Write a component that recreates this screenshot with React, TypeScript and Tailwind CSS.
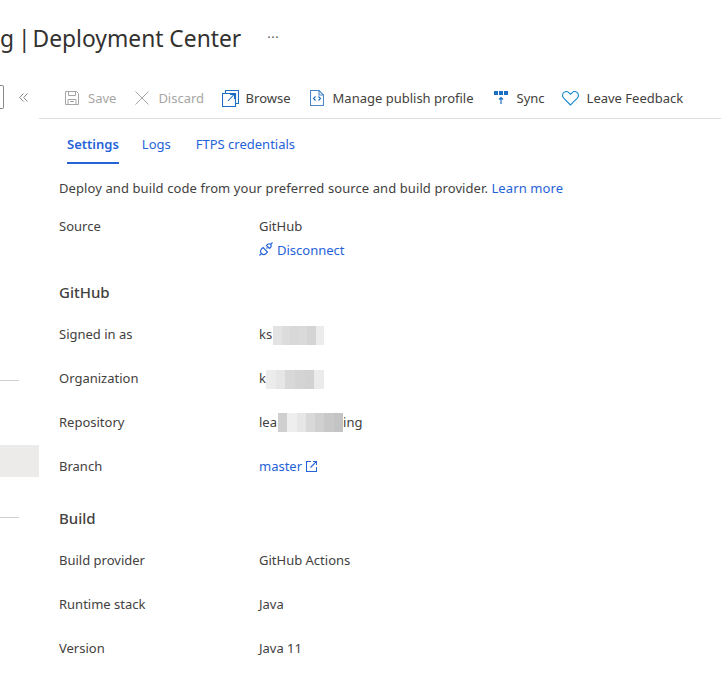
import React from "react";

const Blur = ({ cells, cellClass, className = "" }: { cells: string[]; cellClass: string; className?: string }) => (
  <span className={"inline-flex h-[19px] " + className}>
    {cells.map((c, i) => (
      <span key={i} className={"h-full " + cellClass} style={{ background: c }} />
    ))}
  </span>
);

const Row = ({ label, children }: { label: string; children: React.ReactNode }) => (
  <div className="flex items-center h-[44px]">
    <div className="w-[200px] shrink-0">{label}</div>
    <div className="flex items-center">{children}</div>
  </div>
);

const Tool = ({ icon, label, disabled, className = "", labelClass = "" }: { icon: React.ReactNode; label: string; disabled?: boolean; className?: string; labelClass?: string }) => (
  <div className={"flex items-center gap-[8px] " + (disabled ? "text-[#a8a6a4] " : "text-[#424140] ") + className}>
    <span className="flex w-[16px] h-[16px] items-center justify-center">{icon}</span>
    <span className={labelClass}>{label}</span>
  </div>
);

const SaveIcon = () => (
  <svg width="16" height="16" viewBox="0 0 16 16" fill="none" stroke="#a8a6a4" strokeWidth="1">
    <path d="M1.500 1.500h11l2 2v11h-13z" />
    <path d="M4.500 1.500v4h7v-4M4 14.500v-5h8v5M6 11.500h4" />
  </svg>
);
const XIcon = () => (
  <svg width="16" height="16" viewBox="0 0 16 16" fill="none" stroke="#a8a6a4" strokeWidth="1">
    <path d="M1.500 1.500l13 13M14.500 1.500l-13 13" />
  </svg>
);
const BrowseIcon = () => (
  <svg width="17" height="17" viewBox="0 0 17 17" fill="none" stroke="#1b6ec2" strokeWidth="1.100" className="shrink-0">
    <path d="M3.500 3.500v-3h13v13h-3" />
    <path d="M.500 3.500h13v13H.500z" />
    <path d="M6 11l6-6.500M8 4.500h4.500V9" />
  </svg>
);
const FileIcon = () => (
  <svg width="14" height="16" viewBox="0 0 14 16" fill="none" strokeWidth="1.100" className="shrink-0">
    <path d="M.500.500h8.500l4.500 4.500v10.500H.500z" stroke="#4a88cc" />
    <path d="M9 .500v4.500h4.500" stroke="#4a88cc" />
    <path d="M5.500 6.500l-2 2 2 2M8.500 6.500l2 2-2 2" stroke="#1b6ec2" />
  </svg>
);
const SyncIcon = () => (
  <svg width="16" height="16" viewBox="0 0 16 16" className="shrink-0">
    <path d="M1 1h4v4H1zM6 1h4v4H6zM11 1h4v4h-4z" fill="#1b6ec2" />
    <path d="M8 14V7.500M6 9.500l2-2 2 2" fill="none" stroke="#1b6ec2" strokeWidth="1.200" />
  </svg>
);
const HeartIcon = () => (
  <svg width="17" height="15" viewBox="0 0 17 15" fill="none" stroke="#1b8ad0" strokeWidth="1.100" className="shrink-0">
    <path d="M8.500 14L1.700 7.200C.1 5.500.2 3 1.700 1.700 3.300.3 5.600.4 7 1.800l1.500 1.500L10 1.800c1.400-1.400 3.700-1.500 5.300-.1 1.500 1.300 1.600 3.800 0 5.500z" />
  </svg>
);
const PlugIcon = () => (
  <svg width="14" height="14" viewBox="0 0 14 14" fill="none" stroke="#2563d9" strokeWidth="1.100" className="shrink-0 -mt-[2px]">
    <path d="M.500 13.500l2-2M8.500 5.500l-1 1M11.500 2.500l2-2" />
    <path d="M4 5.500l4.500 4.500-1.500 1.500a2.800 2.800 0 0 1-4.500-4.500z" />
    <path d="M7.500 3.500l3 3 1-1a2.100 2.100 0 0 0-3-3z" />
  </svg>
);
const ExtIcon = () => (
  <svg width="11" height="11" viewBox="0 0 11 11" fill="none" stroke="#2563d9" strokeWidth="1.100" className="shrink-0">
    <path d="M5 .500H.500v10h10V6" />
    <path d="M7 .500h3.500V4M10.500.500L4.500 6.500" />
  </svg>
);
const ChevronsIcon = () => (
  <svg width="9" height="9" viewBox="0 0 9 9" fill="none" stroke="#8a8886" strokeWidth="1" className="ml-[15px] shrink-0">
    <path d="M4.500.500L.700 4.500l3.800 4M8.500.500L4.700 4.500l3.800 4" />
  </svg>
);

export default function App() {
  return (
    <div className="w-[721px] h-[680px] overflow-hidden bg-white text-[13px] leading-[18px] text-[#424140] font-['Noto_Sans','Open_Sans',sans-serif]">
      <header className="flex items-center h-[76px] text-[#323130]">
        <h1 className="flex text-[22.800px] leading-[32px] font-normal mt-[1px]">
          <span>g</span>
          <span className="ml-[4px]">|</span>
          <span className="ml-[2px]">Deployment Center</span>
        </h1>
        <span className="ml-[26px] text-[#605e5c] text-[13px] leading-none tracking-[0.5px] -mt-[1px]">···</span>
      </header>

      <div className="flex">
        <aside className="w-[39px] shrink-0 flex flex-col">
          <div className="flex items-center h-[42px]">
            <div className="w-[4px] h-[24px] border border-l-0 border-[#8a8886] rounded-r-[2px]" />
            <ChevronsIcon />
          </div>
          <div className="mt-[262px] w-[19px] h-px bg-[#d2d0ce]" />
          <div className="mt-[64px] h-[32px] bg-[#edebe9]" />
          <div className="mt-[40px] w-[19px] h-px bg-[#d2d0ce]" />
        </aside>

        <main className="flex-1 min-w-0">
          <div className="flex items-center h-[43px] border-b border-[#dcdcdc] pt-[2px] pl-[25px] gap-[18px]">
            <Tool disabled icon={<SaveIcon />} label="Save" />
            <Tool disabled icon={<XIcon />} label="Discard" />
            <Tool icon={<BrowseIcon />} label="Browse" labelClass="-ml-[0.500px]" />
            <Tool icon={<FileIcon />} label="Manage publish profile" />
            <Tool icon={<SyncIcon />} label="Sync" className="ml-[1px]" />
            <Tool icon={<HeartIcon />} label="Leave Feedback" />
          </div>

          <nav className="flex pl-[28px] h-[45px] text-[#2563d9]">
            <div className="h-full flex items-center pt-[6px] border-b-2 border-[#2563d9] font-semibold">Settings</div>
            <div className="h-full flex items-center pt-[4px] ml-[23px]">Logs</div>
            <div className="h-full flex items-center pt-[4px] ml-[25px]">FTPS credentials</div>
          </nav>

          <section className="pl-[20px]">
            <p className="mt-[15px] mb-[13px] tracking-[0.09px]">
              Deploy and build code from your preferred source and build provider.{" "}
              <span className="text-[#2563d9]">Learn more</span>
            </p>

            <div className="flex h-[32px] items-center">
              <div className="w-[200px]">Source</div>
              <div>GitHub</div>
            </div>
            <div className="pl-[200px] flex items-center gap-[4px] text-[#2563d9] h-[16px]">
              <PlugIcon />
              <span>Disconnect</span>
            </div>

            <h2 className="mt-[20px] h-[28px] flex items-center text-[15px] font-medium">GitHub</h2>

            <div className="mt-[6px]">
              <Row label="Signed in as">
                <span>ks</span>
                <Blur cellClass="w-[8.500px]" cells={["#e3e3e3", "#dcdcdc", "#d8d8d8", "#dadada", "#d4d4d4", "#ececec"]} className="ml-[1px] mt-[2px]" />
              </Row>
              <Row label="Organization">
                <span>k</span>
                <Blur cellClass="w-[9.700px]" cells={["#ececec", "#e6e6e6", "#d8d8d8", "#d4d4d4", "#d2d2d2", "#ebebeb"]} className="mt-[3px]" />
              </Row>
              <Row label="Repository">
                <span>lea</span>
                <Blur cellClass="w-[9.300px]" cells={["#cfcfcf", "#eeeeee", "#e6e6e6", "#d9d9d9", "#d0d0d0", "#c8c8c8", "#c4c4c4"]} className="ml-[1px]" />
                <span>ing</span>
              </Row>
              <Row label="Branch">
                <span className="text-[#2563d9] mr-[4px]">master</span>
                <ExtIcon />
              </Row>
            </div>

            <h2 className="mt-[16px] h-[28px] flex items-center text-[15px] font-medium">Build</h2>

            <div className="mt-[6px]">
              <Row label="Build provider"><span>GitHub Actions</span></Row>
              <Row label="Runtime stack"><span>Java</span></Row>
              <Row label="Version"><span>Java 11</span></Row>
            </div>
          </section>
        </main>
      </div>
    </div>
  );
}
